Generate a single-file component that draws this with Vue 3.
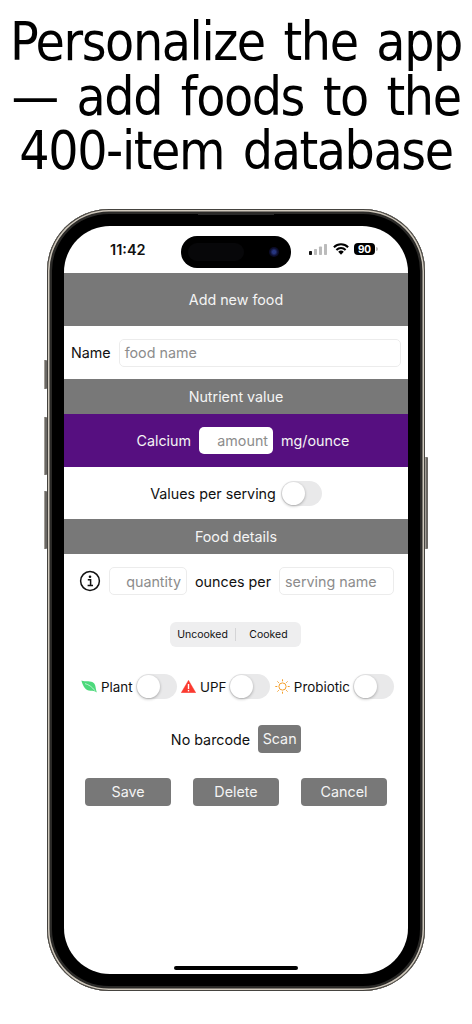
<template>
  <div class="page">
    <h1 class="headline">Personalize the app<br />— add foods to the<br />400-item database</h1>

    <div class="phone">
      <span class="side-btn btn-silent"></span>
      <span class="side-btn btn-up"></span>
      <span class="side-btn btn-down"></span>
      <span class="side-btn btn-power"></span>
      <span class="speaker"></span>

      <div class="screen">
        <div class="status-bar">
          <span class="clock">11:42</span>
          <div class="island">
            <span class="island-cam"></span>
            <span class="island-lens"></span>
          </div>
          <div class="status-icons">
            <svg width="19" height="11" viewBox="0 0 19 11">
              <rect x="0" y="7" width="3" height="4" rx="0.8" fill="#111" />
              <rect x="5" y="5" width="3" height="6" rx="0.8" fill="#bbb" />
              <rect x="10" y="2.5" width="3" height="8.5" rx="0.8" fill="#bbb" />
              <rect x="15" y="0" width="3" height="11" rx="0.8" fill="#bbb" />
            </svg>
            <svg width="16" height="12" viewBox="0 0 16 12">
              <path d="M8 11.8 5.2 8.8a4 4 0 0 1 5.6 0z" fill="#000" />
              <path d="M3.4 6.9a6.6 6.6 0 0 1 9.2 0" fill="none" stroke="#000" stroke-width="2.1" />
              <path d="M.9 4.2a10.2 10.2 0 0 1 14.2 0" fill="none" stroke="#000" stroke-width="2.1" />
            </svg>
            <span class="battery">90</span>
            <span class="battery-tip"></span>
          </div>
        </div>

        <div class="bar bar-tall">Add new food</div>

        <div class="name-row">
          <span>Name</span>
          <div class="field name-field">food name</div>
        </div>

        <div class="bar">Nutrient value</div>

        <div class="nutrient-row">
          <span class="nutrient-left">Calcium</span>
          <div class="amount">amount</div>
          <span>mg/ounce</span>
        </div>

        <div class="serving-row">
          <span>Values per serving</span>
          <span class="toggle"></span>
        </div>

        <div class="bar">Food details</div>

        <div class="quantity-row">
          <svg class="info" width="22" height="22" viewBox="0 0 22 22">
            <circle cx="11" cy="11" r="9.4" fill="none" stroke="#111" stroke-width="1.5" />
            <circle cx="11" cy="6.8" r="1.3" fill="#111" />
            <path d="M8.8 9.8H11.6V15.4M8.6 15.6H14" fill="none" stroke="#111" stroke-width="1.5" />
          </svg>
          <div class="field qty-field">quantity</div>
          <span class="ounces">ounces per</span>
          <div class="field serving-field">serving name</div>
        </div>

        <div class="segment">
          <span class="seg-item seg-first">Uncooked</span>
          <span class="seg-divider"></span>
          <span class="seg-item">Cooked</span>
        </div>

        <div class="flags-row">
          <div class="flag">
            <svg width="16" height="13" viewBox="0 0 16 13">
              <path d="M0.4 0.6C4.6 2 10 .6 13 3.2 14.6 4.8 14.4 7.4 15.8 12.6 13.6 10.8 12 10.8 9.4 10.8 4.4 10.8 2 6.6 .4 .6z" fill="#4cd97b" />
              <path d="M4 3.6C7.6 4.6 11 6.6 14 10.8" fill="none" stroke="#fff" stroke-width="0.6" />
            </svg>
            <span class="flag-label">Plant</span>
            <span class="toggle"></span>
          </div>
          <div class="flag">
            <svg width="15" height="13" viewBox="0 0 15 13">
              <path d="M7.5 .3 14.8 12.8H.2z" fill="#fb3a30" stroke="#fb3a30" stroke-width="0.4" stroke-linejoin="round" />
              <rect x="6.8" y="4" width="1.4" height="5" fill="#fff" />
              <rect x="6.8" y="9.9" width="1.4" height="1.5" fill="#fff" />
            </svg>
            <span class="flag-label">UPF</span>
            <span class="toggle"></span>
          </div>
          <div class="flag">
            <svg width="15" height="15" viewBox="0 0 15 15">
              <circle cx="7.5" cy="7.5" r="3.6" fill="none" stroke="#f5a02c" stroke-width="1" />
              <path d="M7.5 .3v2M7.5 12.7v2M.3 7.5h2M12.7 7.5h2M2.4 2.4l1.4 1.4M11.2 11.2l1.4 1.4M2.4 12.6l1.4-1.4M11.2 3.8l1.4-1.4" fill="none" stroke="#f5a02c" stroke-width="1" />
            </svg>
            <span class="flag-label">Probiotic</span>
            <span class="toggle"></span>
          </div>
        </div>

        <div class="barcode-row">
          <span>No barcode</span>
          <span class="scan">Scan</span>
        </div>

        <div class="actions">
          <span class="action">Save</span>
          <span class="action">Delete</span>
          <span class="action">Cancel</span>
        </div>

        <div class="home-indicator"></div>
      </div>
    </div>
  </div>
</template>

<script setup>
</script>

<style>
  body {
    background: #ffffff;
  }
</style>

<style scoped>
  .page {
    width: 472px;
    height: 1024px;
    overflow: hidden;
    background: #ffffff;
    font-family: Inter, "Liberation Sans", sans-serif;
    color: #111111;
  }

  .headline {
    margin: 0;
    padding-top: 15px;
    height: 193px;
    box-sizing: border-box;
    font-family: "DejaVu Sans", sans-serif;
    font-stretch: condensed;
    font-size: 53px;
    font-weight: 400;
    line-height: 54.5px;
    letter-spacing: -1.4px;
    word-spacing: 5px;
    text-align: center;
    color: #000000;
    white-space: nowrap;
  }

  /* --- Phone frame --- */
  .phone {
    position: relative;
    box-sizing: border-box;
    width: 378px;
    height: 782px;
    margin: 16px 0 0 47px;
    padding: 17px;
    border-radius: 62px;
    background: #000000;
    box-shadow: inset 0 0 0 1px #45433f, inset 0 0 0 2.5px #cfc8bc, inset 0 0 0 5px #2b2a28;
  }

  .speaker {
    position: absolute;
    left: 151px;
    top: 5px;
    width: 76px;
    height: 1px;
    background: #2a2a2a;
  }

  .side-btn {
    position: absolute;
    width: 3px;
    background: #6a6763;
    border-radius: 1px;
    box-shadow: inset 1px 0 0 #a09c95;
  }

  .btn-silent { left: -3px; top: 151px; height: 29px; }
  .btn-up { left: -3px; top: 208px; height: 58px; }
  .btn-down { left: -3px; top: 282px; height: 58px; }
  .btn-power { right: -3px; top: 248px; height: 92px; }

  .screen {
    position: relative;
    height: 748px;
    border-radius: 46px;
    background: #ffffff;
    overflow: hidden;
    font-size: 14.3px;
  }

  /* --- Status bar --- */
  .status-bar {
    position: relative;
    height: 47px;
  }

  .clock {
    position: absolute;
    left: 46px;
    top: 15px;
    font-size: 14.5px;
    font-weight: 600;
  }

  .island {
    position: absolute;
    left: 117px;
    top: 10px;
    width: 110px;
    height: 32px;
    border-radius: 16px;
    background: #000000;
  }

  .island-cam {
    position: absolute;
    left: 7px;
    top: 7px;
    width: 56px;
    height: 18px;
    border-radius: 9px;
    background: #070709;
  }

  .island-lens {
    position: absolute;
    left: 88px;
    top: 11px;
    width: 10px;
    height: 10px;
    border-radius: 50%;
    background: radial-gradient(circle, #26357f 0 22%, #0c0d2c 55%, #07071a 100%);
  }

  .status-icons {
    position: absolute;
    left: 245px;
    top: 17px;
    display: flex;
    align-items: center;
    gap: 5px;
  }

  .battery {
    width: 21px;
    height: 12px;
    border-radius: 4px;
    background: #000000;
    color: #ffffff;
    font-size: 10px;
    font-weight: 700;
    line-height: 12px;
    text-align: center;
  }

  .battery-tip {
    width: 2px;
    height: 4px;
    margin-left: -4px;
    border-radius: 0 2px 2px 0;
    background: #bbbbbb;
  }

  /* --- Section bars --- */
  .bar {
    display: flex;
    align-items: center;
    justify-content: center;
    height: 35px;
    background: #787878;
    color: #f4f4f4;
  }

  .bar-tall {
    height: 53px;
  }

  /* --- Rows --- */
  .name-row {
    display: flex;
    align-items: center;
    gap: 8px;
    height: 53px;
    padding: 0 7px 0 7px;
  }

  .field {
    box-sizing: border-box;
    display: flex;
    align-items: center;
    height: 28px;
    padding: 0 5px;
    border: 1px solid #ececec;
    border-radius: 5px;
    color: #8c8c8c;
  }

  .name-field {
    flex: 1;
  }

  .nutrient-row {
    display: grid;
    grid-template-columns: 1fr auto 1fr;
    align-items: center;
    gap: 8px;
    height: 53px;
    background: #560f80;
    color: #f4f4f4;
  }

  .nutrient-left {
    text-align: right;
  }

  .amount {
    box-sizing: border-box;
    width: 74px;
    height: 27px;
    padding: 0 5px;
    border-radius: 5px;
    background: #ffffff;
    color: #8c8c8c;
    line-height: 27px;
    text-align: right;
  }

  .serving-row {
    display: flex;
    align-items: center;
    justify-content: center;
    gap: 5px;
    height: 52px;
  }

  .toggle {
    position: relative;
    display: block;
    flex: none;
    width: 41px;
    height: 25px;
    border-radius: 13px;
    background: #e9e9ea;
  }

  .toggle::after {
    content: "";
    position: absolute;
    left: 1px;
    top: 1px;
    width: 23px;
    height: 23px;
    border-radius: 50%;
    background: #ffffff;
    box-shadow: 0 1px 3px rgba(0, 0, 0, 0.3);
  }

  .quantity-row {
    display: flex;
    align-items: center;
    height: 28px;
    margin-top: 13px;
    padding-left: 15px;
  }

  .qty-field {
    justify-content: flex-end;
    width: 78px;
    margin-left: 8px;
  }

  .ounces {
    margin: 0 8px;
  }

  .serving-field {
    width: 115px;
  }

  .segment {
    display: flex;
    align-items: center;
    width: 131px;
    height: 25px;
    margin: 27px 0 0 106px;
    border-radius: 6px;
    background: #eeeeef;
    font-size: 10.5px;
  }

  .seg-item {
    flex: 1;
    text-align: center;
  }

  .seg-first {
    flex: none;
    width: 65px;
  }

  .seg-divider {
    width: 1px;
    height: 13px;
    background: #d4d4d6;
  }

  .flags-row {
    display: flex;
    align-items: center;
    justify-content: space-between;
    height: 25px;
    margin-top: 27px;
    padding: 0 14px 0 17px;
  }

  .flag {
    display: flex;
    align-items: center;
    font-size: 13.4px;
  }

  .flag-label {
    margin: 0 3px 0 4px;
  }

  .barcode-row {
    display: flex;
    align-items: center;
    justify-content: center;
    gap: 8px;
    height: 28px;
    margin-top: 26px;
  }

  .scan {
    width: 43px;
    height: 28px;
    border-radius: 4px;
    background: #787878;
    color: #f4f4f4;
    line-height: 28px;
    text-align: center;
  }

  .actions {
    display: flex;
    gap: 22px;
    margin-top: 25px;
    padding-left: 21px;
  }

  .action {
    width: 86px;
    height: 28px;
    border-radius: 4px;
    background: #787878;
    color: #f4f4f4;
    line-height: 28px;
    text-align: center;
  }

  .home-indicator {
    position: absolute;
    left: 110px;
    bottom: 4px;
    width: 124px;
    height: 4px;
    border-radius: 2px;
    background: #000000;
  }
</style>
